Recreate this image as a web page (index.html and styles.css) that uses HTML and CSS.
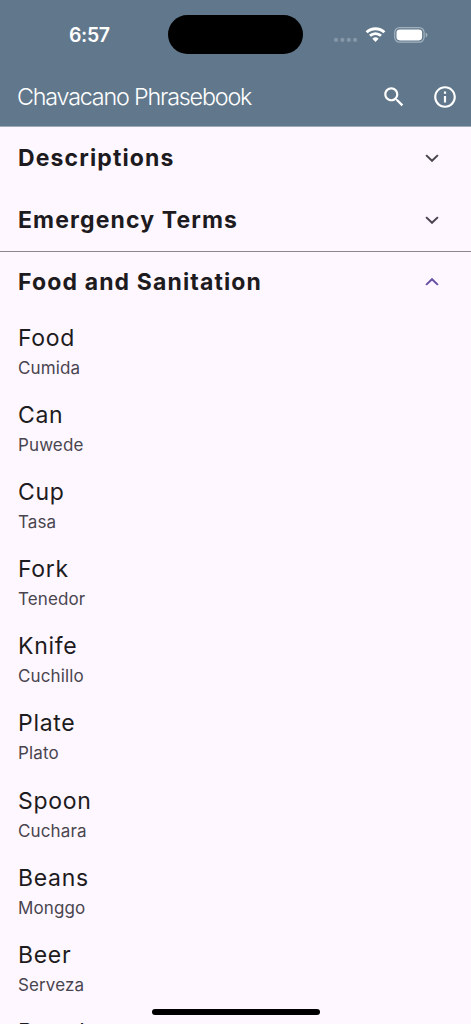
FILE: index.html
```html
<!DOCTYPE html>
<html lang="en">
<head>
<meta charset="utf-8">
<title>Chavacano Phrasebook</title>
<link rel="stylesheet" href="styles.css">
</head>
<body>
<div class="screen">
  <header class="header">
    <div class="status">
      <span class="time">6:57</span>
      <span class="island"></span>
      <svg class="indicators" width="94" height="20" viewBox="0 0 94 20">
        <g fill="#8597a7"><circle cx="3" cy="14.9" r="2.1"/><circle cx="9.4" cy="14.9" r="2.1"/><circle cx="15.8" cy="14.9" r="2.1"/><circle cx="22.1" cy="14.9" r="2.1"/></g>
        <g fill="none" stroke="#fff" stroke-width="2.9"><path d="M33.6 7.2a13 13 0 0 1 17.8 0"/><path d="M37 10.8a8 8 0 0 1 11 0"/></g>
        <path fill="#fff" d="M39.4 13.7a4.5 4.5 0 0 1 6.2 0L42.5 17z"/>
        <rect x="61.7" y="2.6" width="29.4" height="14.6" rx="4.9" fill="none" stroke="#a3b1be" stroke-width="1.2"/>
        <rect x="63.5" y="4.4" width="25.6" height="11" rx="3.3" fill="#fff"/>
        <path fill="#a3b1be" d="M92.7 7.4q1.8.7 1.8 2.5t-1.8 2.5z"/>
      </svg>
    </div>
    <div class="appbar">
      <h1 class="title">Chavacano Phrasebook</h1>
      <svg class="search" width="26" height="26" viewBox="0 0 24 24" fill="#fff"><path d="M15.5 14h-.79l-.28-.27C15.41 12.59 16 11.11 16 9.5 16 5.91 13.09 3 9.5 3S3 5.91 3 9.5 5.91 16 9.5 16c1.61 0 3.09-.59 4.23-1.57l.27.28v.79l5 4.99L20.49 19l-4.99-5zm-6 0C7.01 14 5 11.99 5 9.5S7.01 5 9.5 5 14 7.01 14 9.5 11.99 14 9.5 14z"/></svg>
      <svg class="info" width="26" height="26" viewBox="0 0 24 24" fill="#fff"><path d="M11 7h2v2h-2zm0 4h2v6h-2zm1-9C6.48 2 2 6.48 2 12s4.48 10 10 10 10-4.48 10-10S17.52 2 12 2zm0 18c-4.41 0-8-3.59-8-8s3.59-8 8-8 8 3.59 8 8-3.59 8-8 8z"/></svg>
    </div>
  </header>
  <main>
    <div class="section"><h2 class="name">Descriptions</h2><svg class="chevron" width="14" height="8" viewBox="0 0 14 8"><path d="M1.1 1.1L7 6.8l5.9-5.7"/></svg></div>
    <div class="section"><h2 class="name">Emergency Terms</h2><svg class="chevron" width="14" height="8" viewBox="0 0 14 8"><path d="M1.1 1.1L7 6.8l5.9-5.7"/></svg></div>
    <div class="section open"><h2 class="name">Food and Sanitation</h2><svg class="chevron" width="14" height="8" viewBox="0 0 14 8"><path d="M1.1 6.9L7 1.2l5.9 5.7"/></svg></div>
    <ul class="phrases">
      <li class="phrase"><span class="term">Food</span><span class="translation">Cumida</span></li>
      <li class="phrase"><span class="term">Can</span><span class="translation">Puwede</span></li>
      <li class="phrase"><span class="term">Cup</span><span class="translation">Tasa</span></li>
      <li class="phrase"><span class="term">Fork</span><span class="translation">Tenedor</span></li>
      <li class="phrase"><span class="term">Knife</span><span class="translation">Cuchillo</span></li>
      <li class="phrase"><span class="term">Plate</span><span class="translation">Plato</span></li>
      <li class="phrase"><span class="term">Spoon</span><span class="translation">Cuchara</span></li>
      <li class="phrase"><span class="term">Beans</span><span class="translation">Monggo</span></li>
      <li class="phrase"><span class="term">Beer</span><span class="translation">Serveza</span></li>
      <li class="phrase"><span class="term">Bread</span></li>
    </ul>
  </main>
  <div class="home-indicator"></div>
</div>
</body>
</html>
```
FILE: styles.css
```css
* { box-sizing: border-box; }
body { margin: 0; }
.screen {
  position: relative;
  width: 471px;
  height: 1024px;
  overflow: hidden;
  background: #fef7ff;
  color: #1d1b20;
  font-family: Inter, "Liberation Sans", sans-serif;
}
.header { height: 127px; background: #61788c; color: #fff; border-bottom: 1px solid #9caab9; }
.status { display: flex; align-items: flex-start; height: 68px; padding-left: 69px; }
.time { width: 99.4px; padding-top: 23px; font-size: 19.5px; line-height: 24px; font-weight: 600; letter-spacing: -0.4px; }
.island { width: 134.4px; height: 39px; margin-top: 15.3px; border-radius: 20px; background: #000; }
.indicators { margin: 25px 0 0 30px; overflow: visible; }
.appbar { display: flex; align-items: center; height: 58px; padding: 0 13px 0 17px; }
.title { flex: 1; margin: 0; font-size: 23.3px; line-height: 30px; font-weight: 300; letter-spacing: -1.18px; }
.search { margin-right: 25px; }
.section { display: flex; align-items: center; justify-content: space-between; height: 62px; padding: 0 32px 0 18px; }
.open { border-top: 1px solid #8b8690; padding-bottom: 2px; }
.name { margin: 0; font-size: 23px; line-height: 30px; font-weight: 700; letter-spacing: 1.13px; }
.chevron { fill: none; stroke: #49454f; stroke-width: 2; }
.open .chevron { stroke: #6750a4; }
.phrases { list-style: none; margin: 0; padding: 0; }
.phrase { height: 77.1px; padding: 10px 18px 0; }
.term, .translation { display: block; }
.term { font-size: 23px; line-height: 30px; letter-spacing: 0.7px; }
.translation { font-size: 17px; line-height: 24px; margin-top: 3px; color: #49454f; letter-spacing: 0.12px; }
.home-indicator { position: absolute; left: 152px; top: 1009px; width: 168px; height: 6px; border-radius: 3px; background: #000; }
```
